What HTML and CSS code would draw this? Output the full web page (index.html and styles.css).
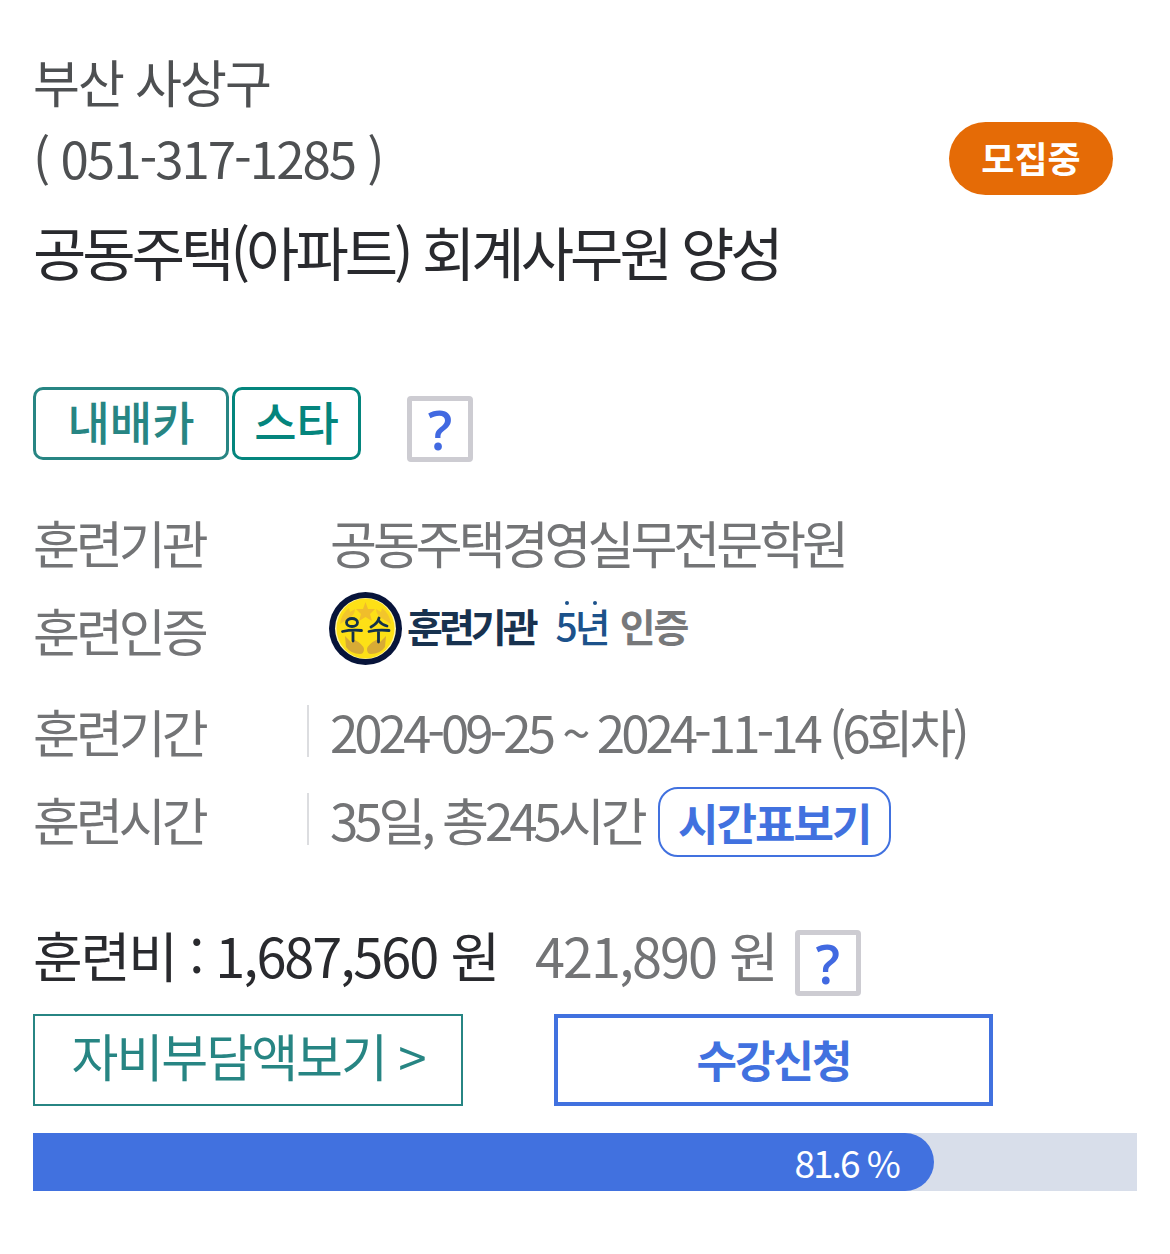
FILE: index.html
```html
<!DOCTYPE html>
<html lang="ko">
<head>
    <meta charset="utf-8">
    <title>공동주택(아파트) 회계사무원 양성</title>
    <meta name="viewport" content="width=device-width" />
    <link rel="stylesheet" href="styles.css">
</head>
<body>

<main class="course">
    <header class="course-head">
        <div class="contact">
            <div>부산 사상구</div>
            <div>( 051-317-1285 )</div>
        </div>
        <span class="status">모집중</span>
    </header>

    <h1 class="title">공동주택(아파트) 회계사무원 양성</h1>

    <div class="tags">
        <span class="tag">내배카</span>
        <span class="tag tag-star">스타</span>
        <button class="help" type="button">?</button>
    </div>

    <dl class="info">
        <div class="row">
            <dt>훈련기관</dt>
            <dd>공동주택경영실무전문학원</dd>
        </div>
        <div class="row">
            <dt>훈련인증</dt>
            <dd class="cert">
                <svg class="seal" viewBox="0 0 73 73" role="img" aria-label="우수">
                    <circle cx="36.5" cy="36.5" r="36.5" fill="#07143a"/>
                    <circle cx="36.5" cy="36.5" r="30.5" fill="#fff6a8"/>
                    <ellipse cx="36.5" cy="36.5" rx="29" ry="30" fill="#fde016"/>
                    <path d="M36.500 10l2.500 7h7l-5 5 2 7-6.500-4-6.500 4 2-7-5-5h7z" fill="#f0bd2b"/>
                    <path d="M20 16q-8 6-9 16l8-5q7-4 7-10l-5 3zM53 16q8 6 9 16l-8-5q-7-4-7-10l5 3z" fill="#f2c52c"/>
                    <path d="M16 44l7 7 1-4q10 5 11 10 0 5-4 5-9 0-14-7zM57 44l-7 7-1-4q-10 5-11 10 0 5 4 5 9 0 14-7z" fill="#d8ab35"/>
                    <g fill="none" stroke="#12304a" stroke-width="2.8" stroke-linecap="round" stroke-linejoin="round">
                        <ellipse cx="23" cy="30.500" rx="5.500" ry="4"/>
                        <path d="M13.500 39.500q9-2 19-1M24 39v10"/>
                        <path d="M50 26q-1 5-8 9M50 29q3 4 8 5M40 39.500q9-2 20-1M49.500 39v11"/>
                    </g>
                </svg>
                <span class="cert-org">훈련기관</span>
                <span class="cert-years">5년</span>
                <span class="cert-mark">인증</span>
            </dd>
        </div>
        <div class="row row-line">
            <dt>훈련기간</dt>
            <dd>2024-09-25 ~ 2024-11-14 (6회차)</dd>
        </div>
        <div class="row row-line">
            <dt>훈련시간</dt>
            <dd>35일, 총245시간 <button class="timetable" type="button">시간표보기</button></dd>
        </div>
    </dl>

    <div class="price">
        <span>훈련비 : 1,687,560 원</span>
        <span class="self-pay">421,890 원</span>
        <button class="help" type="button">?</button>
    </div>

    <div class="actions">
        <button class="btn-cost" type="button">자비부담액보기 &gt;</button>
        <button class="btn-apply" type="button">수강신청</button>
    </div>

    <div class="gauge">
        <div class="gauge-bar" style="width: 81.6%">81.6 %</div>
    </div>
</main>

</body>
</html>
```
FILE: styles.css
```css
* {
    box-sizing: border-box;
}

body {
    margin: 0;
    background: #fff;
    color: #737476;
    font-family: "Noto Sans CJK KR", sans-serif;
    font-size: 51px;
    line-height: 76px;
    letter-spacing: -2px;
}

button {
    padding: 0;
    background: #fff;
    font-family: inherit;
    letter-spacing: inherit;
    cursor: pointer;
}

.course {
    padding: 43px 33px 63px;
}

.course-head {
    display: flex;
    justify-content: space-between;
    align-items: flex-end;
    color: #4e5052;
}

.status {
    margin-right: 24px;
    width: 164px;
    height: 73px;
    border-radius: 37px;
    background: #e56b06;
    color: #fff;
    font-size: 36px;
    font-weight: bold;
    line-height: 70px;
    letter-spacing: 0;
    text-align: center;
}

.title {
    margin: 14px 0 0;
    color: #292a2e;
    font-size: 58px;
    font-weight: normal;
    line-height: 84px;
    letter-spacing: -4px;
}

.tags {
    display: flex;
    gap: 3px;
    margin-top: 94px;
}

.tag {
    width: 196px;
    height: 73px;
    border: 3px solid #278583;
    border-radius: 10px;
    color: #278583;
    font-size: 46px;
    font-weight: 500;
    line-height: 61px;
    letter-spacing: 0;
    text-align: center;
}

.tag-star {
    width: 129px;
    border-color: #04857d;
    color: #04857d;
}

.help {
    width: 66px;
    height: 66px;
    border: 5px solid #cdccd2;
    border-radius: 4px;
    color: #4169e1;
    font-family: "Open Sans", sans-serif;
    font-size: 54px;
    font-weight: 600;
    line-height: 56px;
    letter-spacing: 0;
}

.tags .help {
    margin: 9px 0 0 43px;
}

.info {
    margin: 36px 0 0;
    letter-spacing: -4px;
}

.row {
    display: grid;
    grid-template-columns: 297px 1fr;
    align-items: center;
    height: 88px;
}

.row dd {
    margin: 0;
}

.row-line dd {
    position: relative;
    display: flex;
    align-items: center;
}

.row-line dd::before {
    content: "";
    position: absolute;
    left: -23px;
    width: 2px;
    height: 52px;
    background: #dcdde0;
}

.row:nth-child(3) {
    margin-top: 13px;
}

.row .cert {
    display: flex;
    align-items: center;
    margin-left: -1px;
    padding-bottom: 4px;
    font-size: 39px;
    line-height: 58px;
}

.cert span {
    padding-bottom: 6px;
}

.seal {
    width: 73px;
    height: 73px;
    margin-right: 5px;
}

.cert-org {
    margin-right: 21px;
    color: #18324f;
    font-weight: bold;
}

.cert-years {
    position: relative;
    margin-right: 12px;
    color: #1c528b;
    font-weight: 500;
    letter-spacing: -3px;
}

/* accent dots over the two characters */
.cert-years::before,
.cert-years::after {
    content: "";
    position: absolute;
    top: 5px;
    left: 9px;
    width: 4px;
    height: 4px;
    border-radius: 50%;
    background: #1c528b;
}

.cert-years::after {
    left: 37px;
}

.cert-mark {
    color: #77787a;
    font-weight: bold;
    letter-spacing: -2px;
}

.timetable {
    width: 233px;
    height: 70px;
    margin-top: 6px;
    margin-left: 14px;
    border: 2px solid #4171df;
    border-radius: 20px;
    color: #4171df;
    font-size: 44px;
    font-weight: bold;
    line-height: 60px;
    letter-spacing: -2px;
}

.price {
    display: flex;
    align-items: flex-start;
    margin-top: 54px;
    color: #292a2e;
    font-size: 54px;
}

.price .help {
    margin-top: 13px;
}

.self-pay {
    margin: 0 18px 0 37px;
    color: #737476;
}

.actions {
    display: flex;
    gap: 91px;
    margin-top: 18px;
}

.actions button {
    height: 92px;
}

.btn-cost {
    padding-bottom: 10px;
    width: 430px;
    border: 2px solid #278583;
    color: #278583;
    font-size: 51px;
}

.btn-apply {
    padding-bottom: 2px;
    width: 439px;
    border: 4px solid #4171df;
    color: #4171df;
    font-size: 44px;
    font-weight: bold;
}

.gauge {
    margin-top: 27px;
    background: #d8deea;
}

.gauge-bar {
    height: 58px;
    padding-right: 35px;
    border-radius: 0 29px 29px 0;
    background: #4171df;
    color: #fff;
    font-size: 37px;
    line-height: 58px;
    text-align: right;
}
```
